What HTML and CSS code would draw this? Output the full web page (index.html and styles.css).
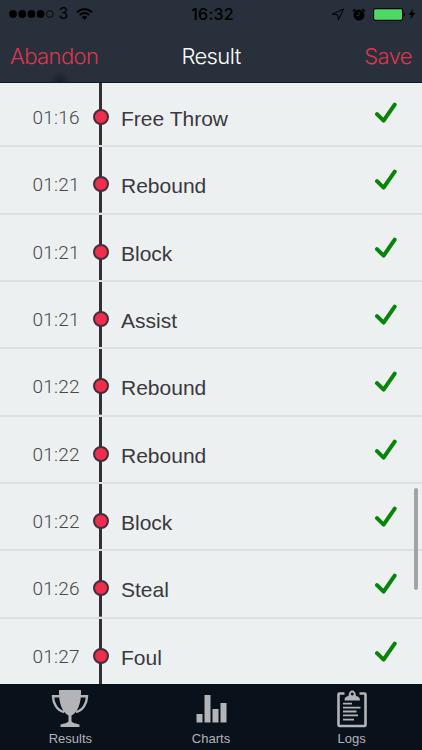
FILE: index.html
```html
<!DOCTYPE html>
<html lang="en">
  <head>
    <meta charset="UTF-8" />
    <meta name="viewport" content="width=device-width, initial-scale=1.0" />
    <title>Result</title>
    <link rel="stylesheet" href="styles.css">
  </head>
  <body>
    <header class="header">
      <div class="status-bar">
        <div class="status-left">
          <svg class="signal" width="45" height="10" viewBox="0 0 45 10">
            <circle cx="4" cy="5" r="3.9" />
            <circle cx="13.2" cy="5" r="3.9" />
            <circle cx="22.4" cy="5" r="3.9" />
            <circle cx="31.6" cy="5" r="3.9" />
            <circle cx="40.8" cy="5" r="3.4" fill="none" stroke="#000" stroke-width="0.8" />
          </svg>
          <span class="carrier">3</span>
          <svg class="wifi" width="17" height="12" viewBox="0 0 17 12">
            <path d="M1 4.4a10.6 10.6 0 0 1 15 0M3.7 7.1a6.8 6.8 0 0 1 9.6 0" fill="none" stroke="#000" stroke-width="2" />
            <path d="M8.5 12L5.7 9.1a4 4 0 0 1 5.6 0z" />
          </svg>
        </div>
        <div class="clock">16:32</div>
        <div class="status-right">
          <svg width="14" height="13" viewBox="0 0 14 13">
            <path d="M12.4 1L1.2 6.2L6.6 6.7L7.4 12z" fill="none" stroke="#000" stroke-width="1" />
          </svg>
          <svg width="14" height="13" viewBox="0 0 14 13">
            <circle cx="7" cy="7" r="5.5" />
            <path d="M1 3.4L3.6 1M13 3.4L10.4 1" stroke="#000" stroke-width="1.5" />
            <path d="M7 3.8V7.4H4.5" fill="none" stroke="#27303b" stroke-width="1" />
          </svg>
          <svg width="33" height="13" viewBox="0 0 33 13">
            <rect x="0.6" y="0.6" width="29" height="11.8" rx="1.8" fill="#4cd964" stroke="#000" stroke-width="1.1" />
            <path d="M30.8 4.5a2.3 2.3 0 0 1 0 4z" />
          </svg>
          <svg width="8" height="12" viewBox="0 0 8 12">
            <path d="M5.2 0.5L0.6 7H3.6L2.4 11.5L7.4 4.8H4.2z" />
          </svg>
        </div>
      </div>
      <nav class="nav-bar">
        <a class="nav-action abandon">Abandon</a>
        <h1>Result</h1>
        <a class="nav-action save">Save</a>
      </nav>
    </header>

    <main class="timeline">
      <ul class="events" id="events"></ul>
      <div class="scrollbar"></div>
    </main>

    <footer class="tab-bar">
      <a class="tab">
        <svg width="40" height="40" viewBox="0 0 40 40">
          <path d="M9 1H31V4C31 14 28 23 21.5 26.5V32C22 34 26 34.5 29.5 35.5V38H10.5V35.5C14 34.5 18 34 18.5 32V26.5C12 23 9 14 9 4z" />
          <path d="M10 7.2H3C3 14 7 21.5 14 23M30 7.2H37C37 14 33 21.5 26 23" fill="none" stroke="#b2b4b7" stroke-width="2.4" />
        </svg>
        <span>Results</span>
      </a>
      <a class="tab">
        <svg width="40" height="40" viewBox="0 0 40 40">
          <path d="M5.5 25H11.5V33.5H5.5zM13.5 6H19.5V33.5H13.5zM21.5 20H27.5V33.5H21.5zM29.5 14H35.5V33.5H29.5z" />
        </svg>
        <span>Charts</span>
      </a>
      <a class="tab">
        <svg width="40" height="40" viewBox="0 0 40 40">
          <path d="M12.5 4.5H7.5Q6.5 4.5 6.5 5.5V36Q6.5 37 7.5 37H32.5Q33.5 37 33.5 36V5.5Q33.5 4.5 32.5 4.5H27.5" fill="none" stroke="#b2b4b7" stroke-width="2.6" />
          <path fill-rule="evenodd" d="M12.5 11.5C12.5 8.5 14 7.5 16.5 7C16.5 -0.5 24 -0.5 24 7C26.5 7.5 28 8.5 28 11.5zM20.2 3.6a1.5 1.5 0 1 0 0.1 0z" />
          <path d="M11 14.7H20M11 18.6H28.5M11 22.5H24.5M11 26.4H26M11 30.6H22" stroke="#b2b4b7" stroke-width="1.8" />
        </svg>
        <span>Logs</span>
      </a>
    </footer>

    <script>
      const events = [
        { time: "01:16", name: "Free Throw" },
        { time: "01:21", name: "Rebound" },
        { time: "01:21", name: "Block" },
        { time: "01:21", name: "Assist" },
        { time: "01:22", name: "Rebound" },
        { time: "01:22", name: "Rebound" },
        { time: "01:22", name: "Block" },
        { time: "01:26", name: "Steal" },
        { time: "01:27", name: "Foul" },
      ];

      document.getElementById("events").innerHTML = events
        .map(
          (item) => `
            <li class="event">
              <span class="time">${item.time}</span>
              <span class="rail"><span class="dot"></span></span>
              <span class="name">${item.name}</span>
              <svg class="check" width="24" height="22" viewBox="0 0 24 22">
                <path d="M3 12.2L9.6 18.7L20.7 2.7" />
              </svg>
            </li>`
        )
        .join("");
    </script>
  </body>
</html>
```

FILE: styles.css
```css
* {
  box-sizing: border-box;
}
body {
  margin: 0;
  height: 750px;
  display: flex;
  flex-direction: column;
  overflow: hidden;
  font-family: "Liberation Sans", Arial, sans-serif;
  background-color: #ecf0f1;
}
.header {
  flex: none;
  height: 83px;
  background: radial-gradient(circle at 60px 81px, #1a202a 0, transparent 10px), #27303b;
  border-bottom: 1px solid #111a24;
}
.status-bar {
  height: 28px;
  display: grid;
  grid-template-columns: 1fr auto 1fr;
  align-items: center;
  padding: 0 6px 0 9px;
  color: #000;
}
.status-left,
.status-right {
  display: flex;
  align-items: center;
}
.status-right {
  justify-content: flex-end;
  gap: 7px;
}
.status-right svg:last-child {
  margin-left: -5px;
}
.carrier {
  margin: 0 8px 0 5px;
  font-size: 16px;
}
.clock {
  font-family: Inter, sans-serif;
  font-size: 16px;
  font-weight: 500;
  letter-spacing: 0.2px;
}
.nav-bar {
  height: 54px;
  display: grid;
  grid-template-columns: 1fr auto 1fr;
  align-items: center;
  padding: 2px 10px 0;
  font-family: Inter, sans-serif;
  font-size: 22px;
  font-weight: 300;
  letter-spacing: -0.6px;
}
.nav-bar h1 {
  margin: 0;
  font-size: 22px;
  font-weight: 300;
  color: #fff;
}
.nav-action {
  color: #dc3650;
}
.save {
  text-align: right;
}
.timeline {
  position: relative;
  flex: 1;
  min-height: 0;
  overflow: hidden;
}
.events {
  list-style: none;
  margin: -3px 0 0;
  padding: 0;
}
.event {
  display: flex;
  height: 67.33px;
  border-bottom: 2px solid #dde0e2;
}
.time {
  width: 92px;
  padding-left: 32.5px;
  line-height: 76px;
  font-family: Roboto, sans-serif;
  font-size: 19px;
  font-weight: 300;
  letter-spacing: 0.2px;
  color: #46464c;
}
.rail {
  width: 17px;
  display: flex;
  justify-content: center;
  padding-top: 29px;
  background: linear-gradient(#332f36, #332f36) center / 3px 100% no-repeat;
}
.dot {
  width: 16px;
  height: 16px;
  border: 2px solid #41303b;
  border-radius: 50%;
  background-color: #f02d4c;
}
.name {
  flex: 1;
  padding-left: 12px;
  line-height: 77px;
  font-size: 21px;
  color: #3b383e;
}
.check {
  margin: 22px 24px 0 0;
}
.check path {
  fill: none;
  stroke: #088408;
  stroke-width: 4;
  stroke-linecap: round;
  stroke-linejoin: round;
}
.scrollbar {
  position: absolute;
  top: 405px;
  right: 4px;
  width: 4px;
  height: 102px;
  border-radius: 2px;
  background-color: #a0a3a5;
}
.tab-bar {
  flex: none;
  height: 66px;
  display: flex;
  background-color: #09111a;
}
.tab {
  flex: 1;
  display: flex;
  flex-direction: column;
  align-items: center;
  padding-top: 5px;
  font-size: 13px;
  line-height: 20px;
  color: #b2b4b7;
}
.tab svg {
  fill: #b2b4b7;
}
```
